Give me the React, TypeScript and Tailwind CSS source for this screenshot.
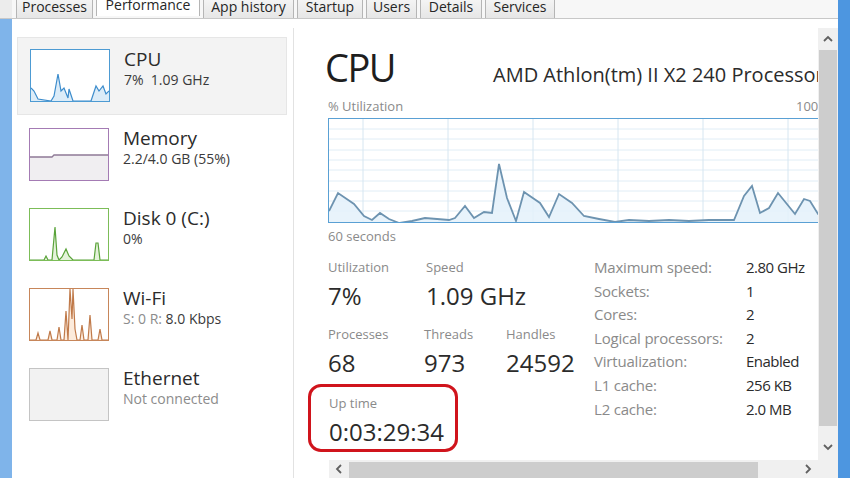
import React from 'react';

const FONT = { fontFamily: '"Open Sans", "Noto Sans", sans-serif' };

const TABS = [
  { label: 'Processes', w: 'w-[77px]' },
  { label: 'Performance', w: 'w-[104px]', active: true },
  { label: 'App history', w: 'w-[91px]' },
  { label: 'Startup', w: 'w-[66px]' },
  { label: 'Users', w: 'w-[51px]' },
  { label: 'Details', w: 'w-[62px]' },
  { label: 'Services', w: 'w-[70px]' },
];

const GRAPH_PTS: [number, number][] = [
  [0, 92], [9, 74], [25, 85], [35, 97], [43, 101], [51, 94], [60, 100], [70, 104], [83, 102],
  [96, 99], [120, 101], [126, 99], [136, 87], [145, 99], [155, 93], [163, 94], [170, 45],
  [178, 79], [187, 102], [195, 73], [211, 84], [220, 98], [230, 75], [243, 84], [255, 97],
  [270, 100], [286, 103], [300, 101], [320, 102], [340, 101], [360, 102], [380, 101],
  [405, 101], [415, 77], [423, 67], [431, 94], [440, 89], [449, 74], [466, 95], [475, 80],
  [481, 82], [489, 95], [500, 96],
];

const toPts = (p: [number, number][]) => p.map(([x, y]) => `${x},${y}`).join(' ');

// sidebar thumbnails, 78x51 inner
const CPU_THUMB: [number, number][] = [
  [0, 38], [3, 41], [7, 49], [20, 51], [23, 46], [27, 24], [30, 41], [33, 38], [37, 48],
  [38, 39], [42, 51], [60, 51], [65, 36], [68, 41], [72, 36], [75, 44], [78, 41],
];
const DISK_THUMB: [number, number][] = [
  [0, 51], [14, 51], [16, 47], [18, 51], [22, 51], [25, 18], [27, 46], [29, 51], [32, 48],
  [36, 40], [39, 47], [43, 51], [64, 51], [66, 34], [68, 34], [70, 51], [78, 51],
];
const WIFI_THUMB: [number, number][] = [
  [0, 51], [6, 51], [8, 44], [10, 51], [18, 51], [20, 42], [22, 51], [27, 51], [29, 38],
  [31, 51], [34, 51], [36, 22], [38, 51], [40, 0], [42, 30], [43, 0], [45, 40], [47, 51],
  [50, 51], [52, 36], [54, 51], [58, 51], [60, 26], [62, 51], [68, 51], [70, 40], [72, 51],
  [78, 51],
];

function Thumb({ kind }: { kind: 'cpu' | 'mem' | 'disk' | 'wifi' | 'eth' }) {
  if (kind === 'eth') {
    return <div className="w-[80px] h-[53px] shrink-0 border border-[#c4c4c4] bg-[#f2f2f2]" />;
  }
  if (kind === 'mem') {
    return (
      <div className="w-[80px] h-[53px] shrink-0 border border-[#a47bb4] bg-white">
        <svg width="78" height="51" className="block">
          <polygon points="0,28 22,28 24,26 78,26 78,51 0,51" fill="#f0eef1" />
          <polyline points="0,28 22,28 24,26 78,26" fill="none" stroke="#8e7a96" strokeWidth="1.3" />
        </svg>
      </div>
    );
  }
  const cfg = {
    cpu: { border: 'border-[#4d9bd3]', pts: CPU_THUMB, fill: '#dcecf8', stroke: '#3c8ccc' },
    disk: { border: 'border-[#7cbd58]', pts: DISK_THUMB, fill: '#e4f2da', stroke: '#5aa33a' },
    wifi: { border: 'border-[#c7865a]', pts: WIFI_THUMB, fill: '#fcebdc', stroke: '#c07a4a' },
  }[kind];
  return (
    <div className={`w-[80px] h-[53px] shrink-0 border ${cfg.border} bg-white`}>
      <svg width="78" height="51" className="block">
        <polygon points={`0,51 ${toPts(cfg.pts)} 78,51`} fill={cfg.fill} />
        <polyline points={toPts(cfg.pts)} fill="none" stroke={cfg.stroke} strokeWidth="1.2" />
      </svg>
    </div>
  );
}

const ITEMS = [
  { kind: 'cpu' as const, title: 'CPU', sub: '7%  1.09 GHz', active: true },
  { kind: 'mem' as const, title: 'Memory', sub: '2.2/4.0 GB (55%)' },
  { kind: 'disk' as const, title: 'Disk 0 (C:)', sub: '0%' },
  { kind: 'wifi' as const, title: 'Wi-Fi', sub: 'wifi' },
  { kind: 'eth' as const, title: 'Ethernet', sub: 'Not connected', muted: true },
];

const SPECS = [
  ['Maximum speed:', '2.80 GHz'],
  ['Sockets:', '1'],
  ['Cores:', '2'],
  ['Logical processors:', '2'],
  ['Virtualization:', 'Enabled'],
  ['L1 cache:', '256 KB'],
  ['L2 cache:', '2.0 MB'],
];

function Chevron({ dir }: { dir: 'up' | 'down' | 'left' | 'right' }) {
  const d = {
    up: 'M1 6 L5 2 L9 6',
    down: 'M1 2 L5 6 L9 2',
    left: 'M6 1 L2 5 L6 9',
    right: 'M2 1 L6 5 L2 9',
  }[dir];
  const vert = dir === 'up' || dir === 'down';
  return (
    <svg width={vert ? 10 : 8} height={vert ? 8 : 10} className="block">
      <path d={d} fill="none" stroke="#606060" strokeWidth="1.8" />
    </svg>
  );
}

function Stat({ label, value, w }: { label: string; value: string; w: string }) {
  return (
    <div className={`${w} flex flex-col`}>
      <div className="text-[13px] leading-[13px] text-[#8a8a8a]">{label}</div>
      <div className="text-[24px] leading-[24px] text-[#2b2b2b] mt-[10px]">{value}</div>
    </div>
  );
}

export default function App() {
  return (
    <div className="w-[850px] h-[478px] flex overflow-hidden bg-white" style={FONT}>
      {/* left window edge */}
      <div className="w-[12px] flex flex-col">
        <div className="h-[19px] bg-[#ececec] border-b border-[#c8c8c8]" />
        <div className="flex-1 bg-[#7fb4ea]" />
      </div>

      <div className="w-[826px] flex flex-col">
        {/* tabs */}
        <div className="h-[19px] flex items-start bg-[#f7f7f7] border-b border-[#c8c8c8] pl-[4px] gap-[3px]">
          {TABS.map(t => (
            <div
              key={t.label}
              className={`${t.w} shrink-0 flex justify-center border-x border-[#b5b5b5] text-[14px] leading-none text-[#262626] ${
                t.active
                  ? 'h-[19px] bg-white -mb-px mt-[-3px] pt-[1px]'
                  : 'h-[18px] bg-gradient-to-b from-[#f4f4f4] to-[#e6e6e6]'
              }`}
            >
              {t.label}
            </div>
          ))}
        </div>

        <div className="flex-1 flex min-h-0">
          {/* sidebar */}
          <div className="w-[281px] shrink-0 pt-[18px] pl-[5px] pr-[6px] flex flex-col gap-[2px]">
            {ITEMS.map(it => (
              <div
                key={it.title}
                className={`h-[78px] flex pt-[11px] pl-[12px] gap-[14px] ${
                  it.active ? 'bg-[#f3f3f3] border border-[#e6e6e6] pl-[11px] pt-[10px]' : ''
                }`}
              >
                <Thumb kind={it.kind} />
                <div className="flex flex-col pt-px">
                  <div className="text-[19px] leading-[19px] text-[#2b2b2b]">{it.title}</div>
                  <div className={`text-[14px] leading-[14px] mt-[4px] whitespace-pre ${it.muted ? 'text-[#8c8c8c]' : 'text-[#3a3a3a]'}`}>
                    {it.sub === 'wifi' ? (
                      <>
                        <span className="text-[#8c8c8c]">S: 0 R: </span>8.0 Kbps
                      </>
                    ) : (
                      it.sub
                    )}
                  </div>
                </div>
              </div>
            ))}
          </div>

          {/* detail panel */}
          <div className="flex-1 mt-[9px] border-l border-[#e2e2e2] flex flex-col min-w-0">
            <div className="flex-1 flex min-h-0">
              <div className="flex-1 overflow-hidden pl-[34px] pt-[20px] min-w-0">
                <div className="w-[501px]">
                  <div className="flex items-baseline">
                    <div className="w-[168px] shrink-0 ml-[-3px] text-[38px] leading-none text-[#1e1e1e] tracking-[-1.5px]">CPU</div>
                    <div className="text-[20px] leading-none text-[#2b2b2b] whitespace-nowrap">
                      AMD Athlon(tm) II X2 240 Processor
                    </div>
                  </div>
                  <div className="flex justify-between mt-[14px] text-[13px] leading-[13px] text-[#8a8a8a]">
                    <span>% Utilization</span>
                    <span>100%</span>
                  </div>
                  <div className="mt-[5px] w-[501px] h-[105px] border border-[#5aa0d4] bg-white">
                    <svg width="499" height="103" className="block">
                      {[10, 20, 31, 41, 51, 62, 72, 82, 92].map(y => (
                        <line key={y} x1="0" x2="499" y1={y} y2={y} stroke="#e0edf6" strokeWidth="1" />
                      ))}
                      {[34, 119, 204, 289, 374, 459].map(x => (
                        <line key={x} x1={x} x2={x} y1="0" y2="103" stroke="#d6e6f1" strokeWidth="1" />
                      ))}
                      <polygon points={`0,103 ${toPts(GRAPH_PTS)} 499,103`} fill="#e4f1fa" fillOpacity="0.85" />
                      <polyline points={toPts(GRAPH_PTS)} fill="none" stroke="#6d93b0" strokeWidth="1.8" />
                    </svg>
                  </div>
                  <div className="mt-[7px] text-[13px] leading-[13px] text-[#8a8a8a]">60 seconds</div>

                  <div className="flex mt-[13px]">
                    <div className="w-[266px] shrink-0 flex flex-col pt-[5px]">
                      <div className="flex">
                        <Stat label="Utilization" value="7%" w="w-[98px]" />
                        <Stat label="Speed" value="1.09 GHz" w="w-[120px]" />
                      </div>
                      <div className="flex mt-[20px]">
                        <Stat label="Processes" value="68" w="w-[96px]" />
                        <Stat label="Threads" value="973" w="w-[82px]" />
                        <Stat label="Handles" value="24592" w="w-[80px]" />
                      </div>
                      <div className="mt-[9px] ml-[-20px] w-[150px] h-[68px] border-[3px] border-[#d0141c] rounded-[13px] pl-[18px] pt-[10px]">
                        <div className="text-[13px] leading-[13px] text-[#8a8a8a]">Up time</div>
                        <div className="text-[24px] leading-[24px] text-[#2b2b2b] mt-[10px]">0:03:29:34</div>
                      </div>
                    </div>
                    <div className="flex flex-col text-[15px] leading-[23.6px]">
                      {SPECS.map(([k, v]) => (
                        <div key={k} className="flex">
                          <span className="w-[152px] shrink-0 text-[#8a8a8a] tracking-[-0.2px]">{k}</span>
                          <span className="text-[#2b2b2b] tracking-[-0.5px] whitespace-nowrap">{v}</span>
                        </div>
                      ))}
                    </div>
                  </div>
                </div>
              </div>

              {/* vertical scrollbar */}
              <div className="w-[20px] shrink-0 bg-[#f0f0f0] flex flex-col items-center">
                <div className="h-[22px] flex items-center justify-center">
                  <Chevron dir="up" />
                </div>
                <div className="w-[18px] flex-1 bg-[#cdcdcd]" />
                <div className="h-[34px] flex items-end justify-center pb-[9px]">
                  <Chevron dir="down" />
                </div>
              </div>
            </div>

            {/* horizontal scrollbar */}
            <div className="h-[18px] shrink-0 flex">
              <div className="w-[35px] bg-white" />
              <div className="flex-1 flex bg-[#f0f0f0]">
                <div className="w-[20px] flex items-center justify-center">
                  <Chevron dir="left" />
                </div>
                <div className="w-[409px] h-[16px] mt-[2px] bg-[#cdcdcd]" />
                <div className="flex-1" />
                <div className="w-[20px] flex items-center justify-center">
                  <Chevron dir="right" />
                </div>
              </div>
              <div className="w-[20px] bg-[#f0f0f0]" />
            </div>
          </div>
        </div>
      </div>

      {/* right window edge */}
      <div className="w-[12px] bg-[#4d96e0]" />
    </div>
  );
}
